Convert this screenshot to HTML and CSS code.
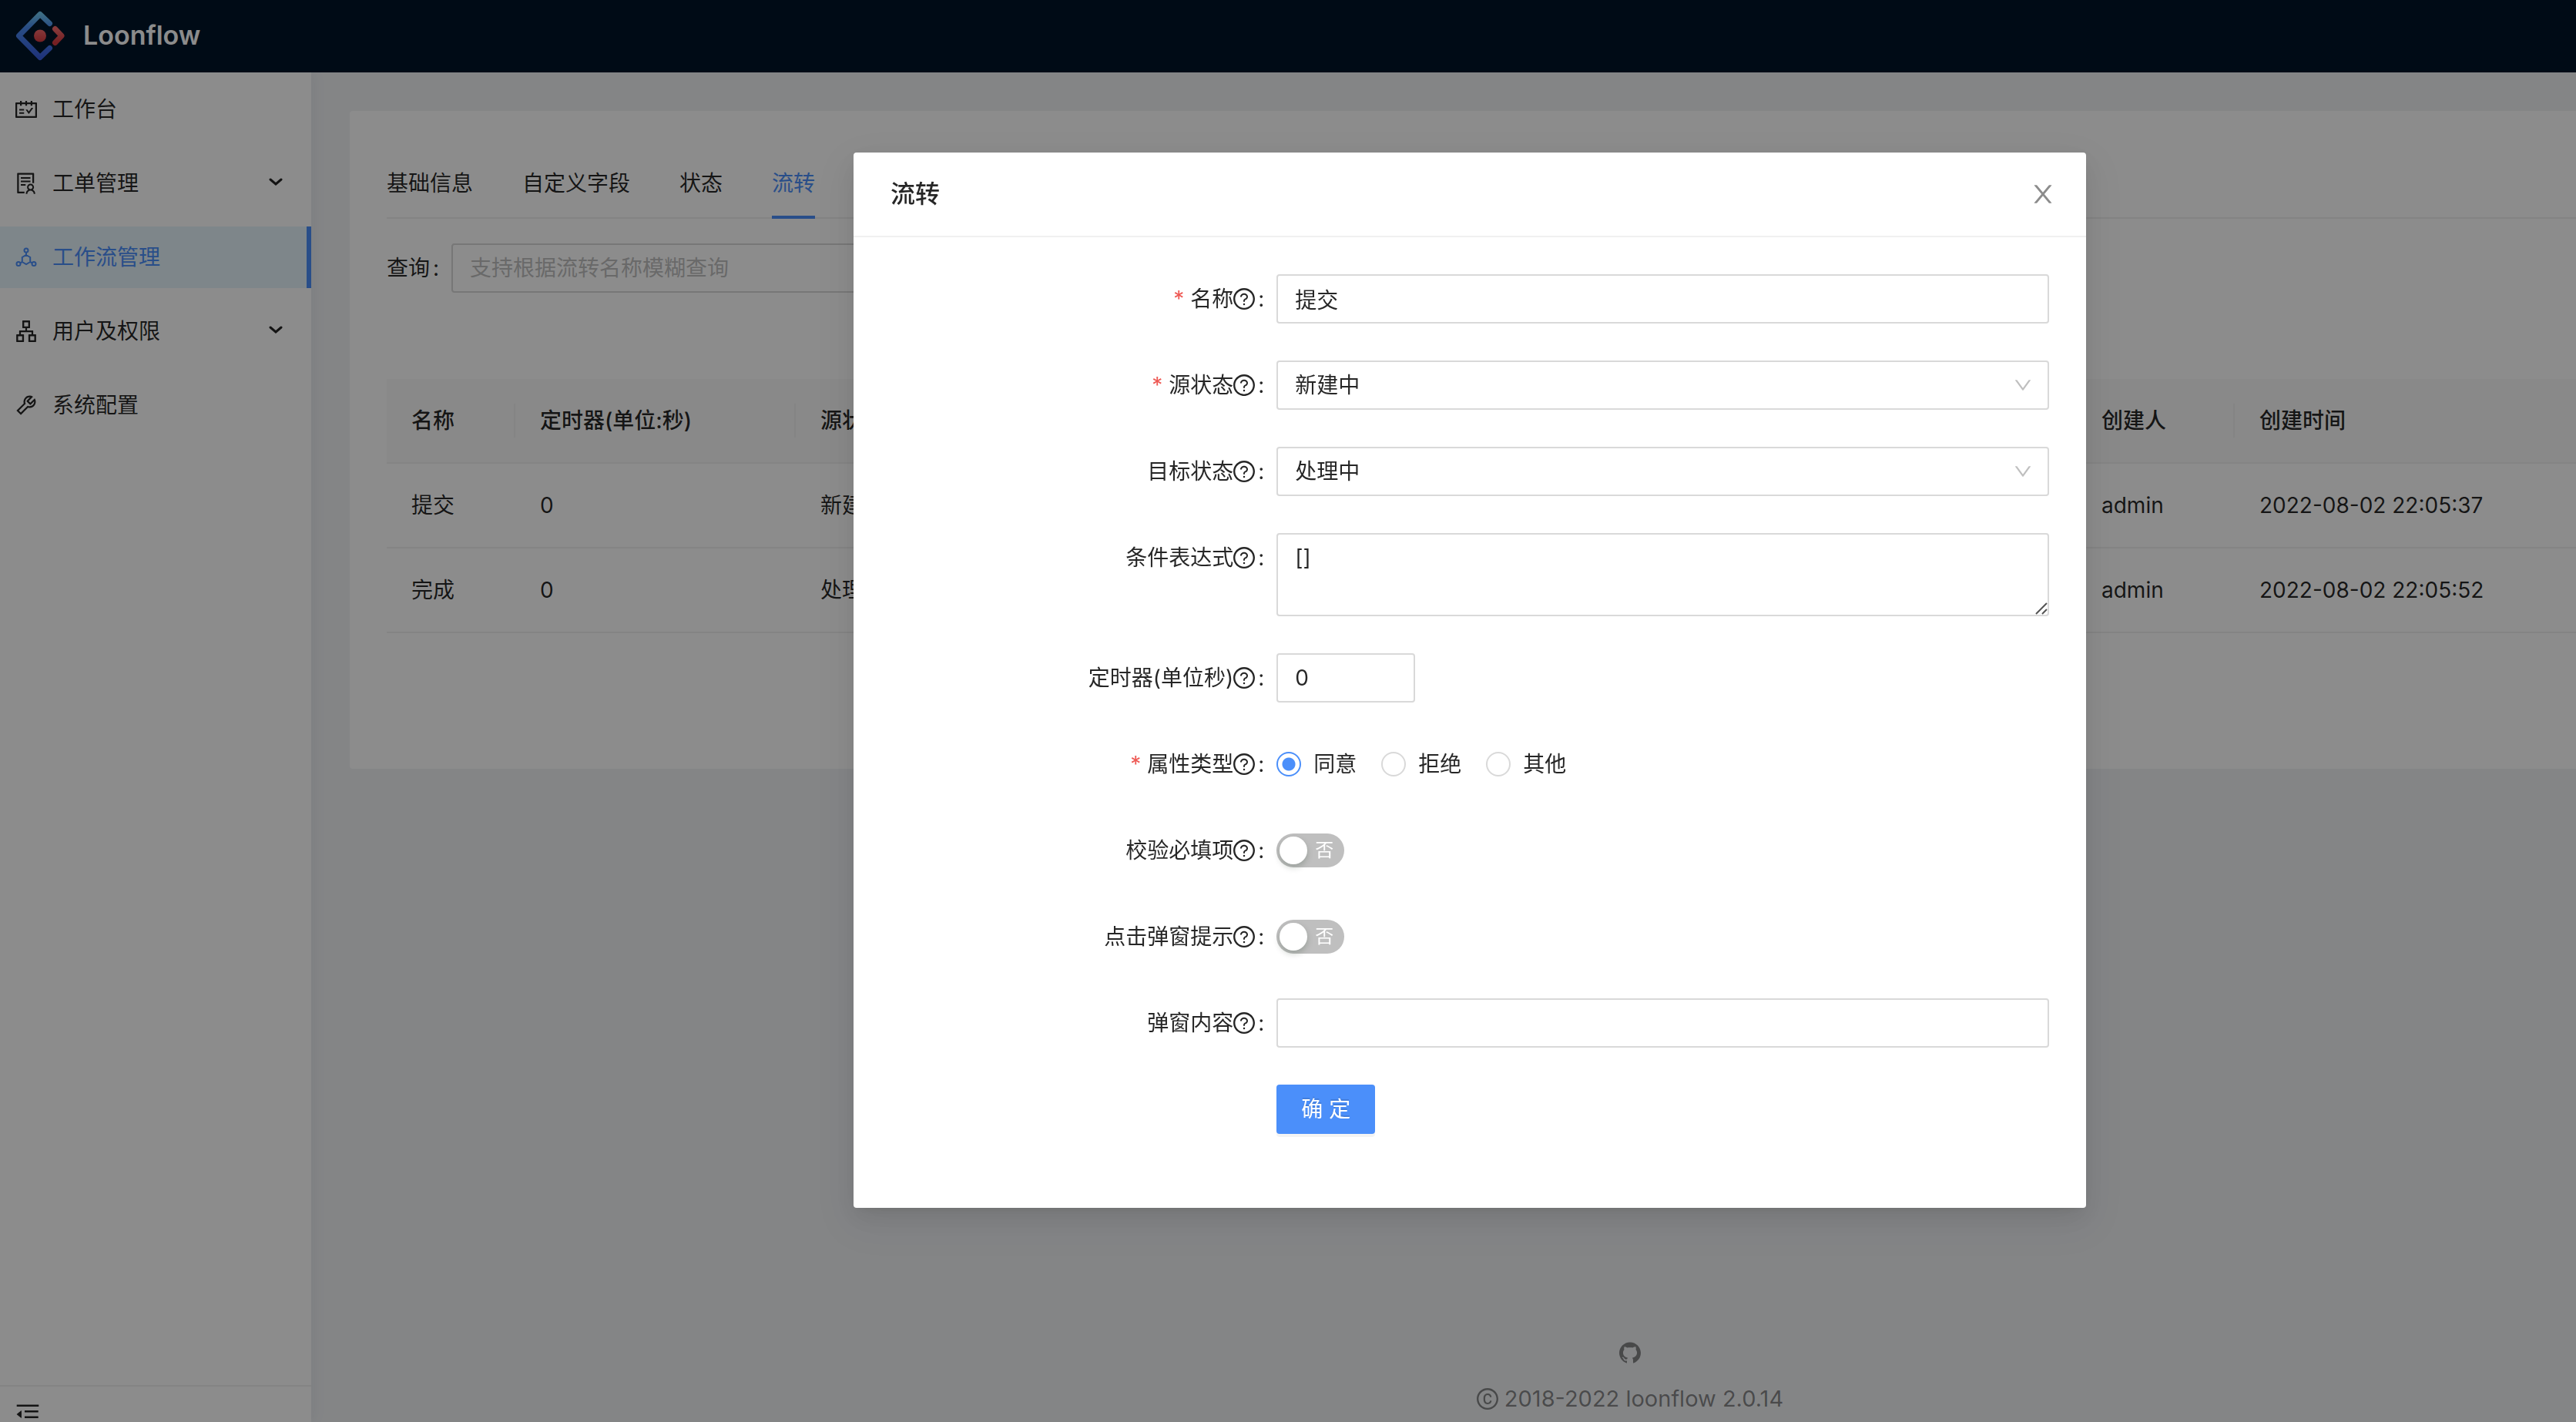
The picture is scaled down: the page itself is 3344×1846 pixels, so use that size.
FILE: index.html
```html
<!DOCTYPE html>
<html lang="zh-CN">
<head>
<meta charset="utf-8">
<title>Loonflow</title>
<link rel="stylesheet" href="styles.css">
</head>
<body>
<svg class="sprite" aria-hidden="true">
  <symbol id="i-help" viewBox="64 64 896 896"><path d="M512 64C264.6 64 64 264.6 64 512s200.6 448 448 448 448-200.6 448-448S759.4 64 512 64zm0 820c-205.4 0-372-166.6-372-372s166.6-372 372-372 372 166.6 372 372-166.6 372-372 372z"/><path d="M623.6 316.7C593.6 290.4 554 276 512 276s-81.6 14.5-111.6 40.7C369.2 344 352 380.7 352 420v7.6c0 4.4 3.6 8 8 8h48c4.4 0 8-3.6 8-8V420c0-44.1 43.1-80 96-80s96 35.9 96 80c0 31.1-22 59.6-56.1 72.7-21.2 8.1-39.2 22.3-52.1 40.9-13.1 19-19.9 41.8-19.9 64.9V620c0 4.4 3.6 8 8 8h48c4.4 0 8-3.6 8-8v-22.7a48.3 48.3 0 0130.9-44.8c59-22.7 97.1-74.7 97.1-132.5.1-39.3-17.1-76-48.3-103.3zM472 732a40 40 0 1080 0 40 40 0 10-80 0z"/></symbol>
  <symbol id="i-down" viewBox="64 64 896 896"><path d="M884 256h-75c-5.1 0-9.9 2.5-12.9 6.6L512 654.2 227.9 262.6c-3-4.1-7.8-6.6-12.9-6.6h-75c-6.5 0-10.3 7.4-6.5 12.7l352.6 486.1c12.8 17.6 39 17.6 51.7 0l352.6-486.1c3.9-5.3.1-12.7-6.4-12.7z"/></symbol>
  <symbol id="i-arrow" viewBox="0 0 18 10"><path d="M2 2l7 6 7-6" fill="none" stroke="currentColor" stroke-width="3" stroke-linecap="round"/></symbol>
</svg>

<header class="topbar">
  <a class="brand" href="#">
    <svg class="brand-logo" viewBox="0 0 64 65">
      <defs>
        <linearGradient id="g-blue" x1="0" y1="0" x2="0" y2="1"><stop offset="0" stop-color="#6fc6f0"/><stop offset=".3" stop-color="#4a8cf0"/><stop offset="1" stop-color="#3a5fe0"/></linearGradient>
        <linearGradient id="g-red" x1="0" y1="0" x2="0" y2="1"><stop offset="0" stop-color="#f4696b"/><stop offset="1" stop-color="#d5393f"/></linearGradient>
      </defs>
      <path d="M44.500 16.500L32 4.500 4.500 32.500l27.500 28 12.500-12" fill="none" stroke="url(#g-blue)" stroke-width="7" stroke-linecap="round" stroke-linejoin="round"/>
      <path d="M51.500 23.500l8.500 9-8.500 9" fill="none" stroke="url(#g-red)" stroke-width="7" stroke-linecap="round" stroke-linejoin="round"/>
      <circle cx="32" cy="32.500" r="8" fill="url(#g-red)"/>
    </svg>
    <span class="brand-name">Loonflow</span>
  </a>
</header>

<div class="layout">
  <aside class="sidebar">
    <nav class="menu">
      <a class="menu-item" href="#">
        <svg class="icon" viewBox="64 64 896 896"><path d="M928 224H768v-56c0-4.400-3.600-8-8-8h-56c-4.400 0-8 3.600-8 8v56H548v-56c0-4.400-3.600-8-8-8h-56c-4.400 0-8 3.600-8 8v56H328v-56c0-4.400-3.600-8-8-8h-56c-4.400 0-8 3.600-8 8v56H96c-17.700 0-32 14.300-32 32v576c0 17.700 14.300 32 32 32h832c17.700 0 32-14.300 32-32V256c0-17.700-14.300-32-32-32zm-40 568H136V296h120v56c0 4.400 3.600 8 8 8h56c4.400 0 8-3.600 8-8v-56h148v56c0 4.400 3.600 8 8 8h56c4.400 0 8-3.600 8-8v-56h148v56c0 4.400 3.600 8 8 8h56c4.400 0 8-3.600 8-8v-56h120v496zM416 496H232c-4.400 0-8 3.600-8 8v48c0 4.400 3.600 8 8 8h184c4.400 0 8-3.600 8-8v-48c0-4.400-3.600-8-8-8zm0 136H232c-4.400 0-8 3.600-8 8v48c0 4.400 3.600 8 8 8h184c4.400 0 8-3.600 8-8v-48c0-4.400-3.600-8-8-8zm308.200-177.400L620.600 598.300l-52.800-73.100c-3-4.200-7.800-6.600-12.900-6.600H500c-6.500 0-10.300 7.400-6.500 12.700l114.100 158.200a15.900 15.900 0 0025.800 0l165-228.700c3.800-5.300 0-12.700-6.500-12.700H737c-5-.1-9.800 2.400-12.800 6.500z"/></svg>
        <span>工作台</span>
      </a>
      <a class="menu-item" href="#">
        <svg class="icon" viewBox="64 64 896 896"><path d="M688 264c0-4.400-3.600-8-8-8H296c-4.400 0-8 3.600-8 8v48c0 4.400 3.600 8 8 8h384c4.400 0 8-3.600 8-8v-48zm-8 136H296c-4.400 0-8 3.600-8 8v48c0 4.400 3.600 8 8 8h384c4.400 0 8-3.600 8-8v-48c0-4.400-3.600-8-8-8zM480 544H296c-4.400 0-8 3.600-8 8v48c0 4.400 3.600 8 8 8h184c4.400 0 8-3.600 8-8v-48c0-4.400-3.600-8-8-8zm-48 308H208V148h560v344c0 4.400 3.600 8 8 8h56c4.400 0 8-3.600 8-8V108c0-17.700-14.300-32-32-32H168c-17.700 0-32 14.300-32 32v784c0 17.700 14.300 32 32 32h264c4.400 0 8-3.600 8-8v-56c0-4.400-3.600-8-8-8zm356.800-74.400c29-26.300 47.200-64.300 47.200-106.600 0-79.500-64.500-144-144-144s-144 64.500-144 144c0 42.300 18.200 80.300 47.200 106.600-57 32.500-96.200 92.700-99.200 162.100-.2 4.500 3.500 8.300 8 8.300h48.100c4.200 0 7.700-3.300 8-7.600C564 871.200 621.700 816 692 816s128 55.200 131.900 124.400c.2 4.200 3.700 7.600 8 7.600H880c4.600 0 8.200-3.800 8-8.300-2.900-69.500-42.200-129.600-99.200-162.100zM692 591c44.200 0 80 35.800 80 80s-35.800 80-80 80-80-35.800-80-80 35.800-80 80-80z"/></svg>
        <span>工单管理</span>
        <svg class="menu-arrow"><use href="#i-arrow"/></svg>
      </a>
      <a class="menu-item is-active" href="#" aria-current="page">
        <svg class="icon icon-line" viewBox="0 0 28 28"><circle cx="14" cy="5" r="2.500"/><circle cx="4" cy="22.500" r="2.500"/><circle cx="24" cy="22.500" r="2.500"/><path d="M14 7.500V11M14 11l5.200 3v6L14 23l-5.200-3v-6zM8.800 20l-2.500 1.300M19.200 20l2.500 1.300"/></svg>
        <span>工作流管理</span>
      </a>
      <a class="menu-item" href="#">
        <svg class="icon" viewBox="64 64 896 896"><path d="M908 640H804V488c0-4.400-3.600-8-8-8H548v-96h108c8.800 0 16-7.200 16-16V80c0-8.800-7.200-16-16-16H368c-8.800 0-16 7.200-16 16v288c0 8.800 7.200 16 16 16h108v96H228c-4.400 0-8 3.600-8 8v152H116c-8.800 0-16 7.200-16 16v288c0 8.800 7.200 16 16 16h288c8.800 0 16-7.200 16-16V656c0-8.800-7.200-16-16-16H292v-88h440v88H620c-8.800 0-16 7.200-16 16v288c0 8.800 7.200 16 16 16h288c8.800 0 16-7.200 16-16V656c0-8.800-7.200-16-16-16zm-564 76v168H176V716h168zm84-408V140h168v168H428zm420 576H680V716h168v168z"/></svg>
        <span>用户及权限</span>
        <svg class="menu-arrow"><use href="#i-arrow"/></svg>
      </a>
      <a class="menu-item" href="#">
        <svg class="icon" viewBox="64 64 896 896"><path d="M876.600 239.500c-.5-.9-1.200-1.800-2-2.500-5-5-13.100-5-18.100 0L684.200 409.300l-67.900-67.900L788.700 169c.8-.8 1.400-1.600 2-2.500 3.600-6.100 1.600-13.900-4.500-17.500-98.200-58-226.800-44.700-311.300 39.700-67 67-89.200 162-66.500 247.400l-293 293c-3 3-2.800 7.900.3 11l169.700 169.700c3.100 3.100 8.100 3.300 11 .3l292.900-292.900c85.500 22.800 180.500.7 247.600-66.400 84.400-84.500 97.700-213.100 39.700-311.300zM786 499.800c-58.100 58.100-145.300 69.300-214.600 33.600l-8.800 8.800-.1-.1-274 274.100-79.200-79.200 230.100-230.100s0 .1.1.1l52.800-52.800c-35.700-69.300-24.500-156.500 33.600-214.600a184.200 184.200 0 01144-53.500L537 318.900a32.050 32.050 0 000 45.300l124.500 124.500a32.050 32.050 0 0045.300 0l132.800-132.800c3.700 51.800-14.400 104.800-53.600 143.900z"/></svg>
        <span>系统配置</span>
      </a>
    </nav>
    <button class="fold" type="button" aria-label="收起菜单">
      <svg class="icon icon-lg" viewBox="64 64 896 896"><path d="M408 442h480c4.400 0 8-3.600 8-8v-56c0-4.400-3.600-8-8-8H408c-4.400 0-8 3.600-8 8v56c0 4.400 3.600 8 8 8zm-8 204c0 4.400 3.600 8 8 8h480c4.400 0 8-3.600 8-8v-56c0-4.400-3.600-8-8-8H408c-4.400 0-8 3.600-8 8v56zm504-486H120c-4.400 0-8 3.600-8 8v56c0 4.400 3.600 8 8 8h784c4.400 0 8-3.600 8-8v-56c0-4.400-3.600-8-8-8zm0 632H120c-4.400 0-8 3.600-8 8v56c0 4.400 3.600 8 8 8h784c4.400 0 8-3.600 8-8v-56c0-4.400-3.600-8-8-8zM115.400 518.900L271.700 642c5.800 4.600 14.400.5 14.400-6.900V388.900c0-7.400-8.500-11.500-14.400-6.900L115.400 505.100a8.740 8.740 0 000 13.800z"/></svg>
    </button>
  </aside>

  <main class="content">
    <section class="card">
      <nav class="tabs">
        <a class="tab" href="#">基础信息</a>
        <a class="tab" href="#">自定义字段</a>
        <a class="tab" href="#">状态</a>
        <a class="tab is-active" href="#">流转</a>
      </nav>
      <div class="search">
        <label for="search">查询<span class="colon">:</span></label>
        <input class="field search-field" id="search" type="text" placeholder="支持根据流转名称模糊查询">
      </div>
      <table class="table">
        <colgroup><col class="c-name"><col class="c-timer"><col class="c-source"><col class="c-user"><col></colgroup>
        <thead>
          <tr><th>名称</th><th>定时器(单位:秒)</th><th>源状态</th><th>创建人</th><th>创建时间</th></tr>
        </thead>
        <tbody>
          <tr><td>提交</td><td>0</td><td>新建中</td><td>admin</td><td>2022-08-02 22:05:37</td></tr>
          <tr><td>完成</td><td>0</td><td>处理中</td><td>admin</td><td>2022-08-02 22:05:52</td></tr>
        </tbody>
      </table>
    </section>
    <footer class="footer">
      <a class="footer-link" href="#" aria-label="GitHub"><svg class="icon" viewBox="64 64 896 896"><path d="M511.600 76.300C264.300 76.200 64 276.400 64 523.500 64 718.900 189.300 885 363.800 946c23.500 5.900 19.900-10.800 19.900-22.200v-77.500c-135.700 15.900-141.200-73.900-150.300-88.900C215 726 171.500 718 184.500 703c30.900-15.900 62.400 4 98.900 57.900 26.400 39.100 77.900 32.500 104 26 5.700-23.500 17.900-44.500 34.700-60.800-140.600-25.200-199.200-111-199.200-213 0-49.500 16.300-95 48.300-131.700-20.400-60.500 1.900-112.300 4.900-120 58.100-5.200 118.500 41.600 123.200 45.300 33-8.900 70.700-13.600 112.900-13.600 42.400 0 80.200 4.900 113.500 13.900 11.300-8.600 67.300-48.800 121.300-43.900 2.900 7.700 24.700 58.300 5.500 118 32.400 36.800 48.900 82.700 48.900 132.300 0 102.200-59 188.100-200 212.900a127.500 127.500 0 0138.100 91v112.500c.8 9 0 17.900 15 17.900 177.100-59.700 304.600-227 304.600-424.100 0-247.200-200.400-447.300-447.500-447.300z"/></svg></a>
      <p class="copyright"><svg class="icon" viewBox="64 64 896 896"><path d="M512 64C264.600 64 64 264.600 64 512s200.600 448 448 448 448-200.600 448-448S759.400 64 512 64zm0 820c-205.400 0-372-166.600-372-372s166.600-372 372-372 372 166.600 372 372-166.600 372-372 372z"/><path d="M517.600 351.300c53 0 89 33.800 93 83.400.3 4.200 3.800 7.400 8 7.400h56.700c2.600 0 4.700-2.100 4.700-4.700 0-86.700-68.400-147.400-162.700-147.400C407.400 290 344 364.200 344 486.800v52.300C344 660.800 407.400 734 517.300 734c94 0 162.700-58.800 162.700-141.400 0-2.600-2.100-4.700-4.700-4.700h-56.800c-4.200 0-7.600 3.200-8 7.300-4.200 46.100-40.100 77.800-93 77.800-65.300 0-102.100-47.900-102.100-133.600v-52.600c.1-87 37-135.500 102.200-135.500z"/></svg><span>2018-2022 loonflow 2.0.14</span></p>
    </footer>
  </main>
</div>

<div class="mask">
  <section class="modal" role="dialog" aria-modal="true" aria-labelledby="modal-title">
    <header class="modal-head">
      <h2 class="modal-title" id="modal-title">流转</h2>
      <button class="close" type="button" aria-label="关闭"><svg class="icon icon-lg" viewBox="64 64 896 896"><path d="M563.800 512l262.500-312.900c4.400-5.200.7-13.100-6.100-13.100h-79.800c-4.700 0-9.200 2.100-12.300 5.700L511.600 449.800 295.100 191.700c-3-3.600-7.500-5.700-12.300-5.700H203c-6.800 0-10.500 7.900-6.100 13.100L459.400 512 196.900 824.900A7.950 7.950 0 00203 838h79.800c4.700 0 9.200-2.100 12.300-5.700l216.500-258.100 216.500 258.100c3 3.600 7.500 5.700 12.300 5.700h79.800c6.800 0 10.500-7.900 6.100-13.100L563.800 512z"/></svg></button>
    </header>
    <form class="form">
      <label class="label required" for="name">名称<svg class="icon"><use href="#i-help"/></svg><span class="colon">:</span></label>
      <input class="field" id="name" type="text" value="提交">

      <label class="label required" for="source">源状态<svg class="icon"><use href="#i-help"/></svg><span class="colon">:</span></label>
      <div class="select">
        <select class="field" id="source"><option>新建中</option></select>
        <svg class="select-arrow"><use href="#i-down"/></svg>
      </div>

      <label class="label" for="target">目标状态<svg class="icon"><use href="#i-help"/></svg><span class="colon">:</span></label>
      <div class="select">
        <select class="field" id="target"><option>处理中</option></select>
        <svg class="select-arrow"><use href="#i-down"/></svg>
      </div>

      <label class="label" for="expr">条件表达式<svg class="icon"><use href="#i-help"/></svg><span class="colon">:</span></label>
      <div class="area">
        <textarea class="field field-area" id="expr">[]</textarea>
        <svg class="grip" viewBox="0 0 16 16"><path d="M1 15L15 1M9 15l6-6" fill="none" stroke="#555" stroke-width="2"/></svg>
      </div>

      <label class="label" for="timer">定时器(单位秒)<svg class="icon"><use href="#i-help"/></svg><span class="colon">:</span></label>
      <input class="field field-number" id="timer" type="text" inputmode="numeric" value="0">

      <span class="label required" id="attr-label">属性类型<svg class="icon"><use href="#i-help"/></svg><span class="colon">:</span></span>
      <div class="radios" role="radiogroup" aria-labelledby="attr-label">
        <label class="radio"><input type="radio" name="attr" checked>同意</label>
        <label class="radio"><input type="radio" name="attr">拒绝</label>
        <label class="radio"><input type="radio" name="attr">其他</label>
      </div>

      <label class="label" for="check">校验必填项<svg class="icon"><use href="#i-help"/></svg><span class="colon">:</span></label>
      <div class="cell"><button class="switch" id="check" type="button" role="switch" aria-checked="false"><span class="knob"></span>否</button></div>

      <label class="label" for="prompt">点击弹窗提示<svg class="icon"><use href="#i-help"/></svg><span class="colon">:</span></label>
      <div class="cell"><button class="switch" id="prompt" type="button" role="switch" aria-checked="false"><span class="knob"></span>否</button></div>

      <label class="label" for="body">弹窗内容<svg class="icon"><use href="#i-help"/></svg><span class="colon">:</span></label>
      <input class="field" id="body" type="text">

      <button class="submit" type="submit">确 定</button>
    </form>
  </section>
</div>
</body>
</html>
```

FILE: styles.css
```css
:root {
  --primary: #4b8ffa;
  --text: rgba(0, 0, 0, .85);
  --muted: rgba(0, 0, 0, .45);
  --border: #d9d9d9;
  --line: #f0f0f0;
}

* { box-sizing: border-box; }

html { overflow: hidden; }

body {
  display: flex;
  flex-direction: column;
  height: 100vh;
  margin: 0;
  overflow: hidden;
  background: #f0f2f5;
  color: var(--text);
  font: 28px/44px Inter, "Noto Sans CJK SC", sans-serif;
}

a { color: inherit; text-decoration: none; }
button, input, select, textarea { margin: 0; font: inherit; color: inherit; }
button { padding: 0; border: 0; background: none; cursor: pointer; }

.sprite { position: absolute; width: 0; height: 0; }
.icon { flex: none; width: 28px; height: 28px; fill: currentColor; }
.icon-lg { width: 32px; height: 32px; }
.icon-line { fill: none; stroke: currentColor; stroke-width: 2; }

/* Top bar */
.topbar {
  display: flex;
  flex: none;
  align-items: center;
  height: 94px;
  padding: 0 20px 2px;
  background: #001529;
}
.brand { display: flex; align-items: center; gap: 24px; color: #fff; }
.brand-logo { width: 64px; height: 65px; }
.brand-name { font-size: 34px; font-weight: 600; }

/* Side menu */
.layout { display: flex; flex: 1; min-height: 0; }
.sidebar {
  display: flex;
  flex: none;
  flex-direction: column;
  width: 404px;
  background: #fff;
  box-shadow: 4px 0 16px rgba(29, 35, 41, .05);
}
.menu { display: flex; flex: 1; flex-direction: column; gap: 16px; padding-top: 8px; }
.menu-item {
  display: flex;
  align-items: center;
  gap: 20px;
  height: 80px;
  padding: 0 37px 0 20px;
}
.menu-item.is-active {
  border-right: 6px solid var(--primary);
  background: #e6f4fb;
  color: var(--primary);
}
.menu-arrow { width: 18px; height: 10px; margin: 0 0 4px auto; }
.fold {
  display: flex;
  height: 48px;
  padding: 20px 20px 0;
  border-top: 2px solid var(--line);
}

/* Page content */
.content {
  display: flex;
  flex: 1;
  flex-direction: column;
  min-width: 0;
  padding: 50px 0 8px 50px;
}
.card { padding: 72px 0 176px 48px; background: #fff; border-radius: 4px 0 0 4px; }

.tabs { display: flex; gap: 64px; border-bottom: 2px solid var(--line); }
.tab { height: 68px; margin-bottom: -2px; }
.tab.is-active { border-bottom: 4px solid var(--primary); color: var(--primary); }

.colon { margin: 0 16px 0 4px; }
.search { display: flex; align-items: center; padding: 32px 0 112px; }
.search label { flex: none; }

.field {
  display: block;
  width: 100%;
  height: 64px;
  padding: 0 22px;
  border: 2px solid var(--border);
  border-radius: 4px;
  outline: 0;
  background: #fff;
}
.field::placeholder { color: #bfbfbf; opacity: 1; }
.search-field { width: 720px; }

.table {
  width: 100%;
  border-collapse: separate;
  border-spacing: 0;
  table-layout: fixed;
  text-align: left;
}
.c-name { width: 167px; }
.c-timer { width: 364px; }
.c-source { width: 1663px; }
.c-user { width: 205px; }
.table th, .table td {
  padding: 32px 0 32px 32px;
  border-bottom: 2px solid var(--line);
}
.table th { position: relative; background: #fafafa; font-weight: 500; }
.table th:not(:last-child)::after {
  position: absolute;
  top: 32px;
  right: 0;
  width: 2px;
  height: 44px;
  background: var(--line);
  content: "";
}

.footer {
  display: flex;
  flex-direction: column;
  align-items: center;
  gap: 16px;
  margin-top: auto;
  padding-left: 434px;
  color: var(--muted);
}
.footer-link, .copyright { display: flex; align-items: center; gap: 8px; height: 44px; margin: 0; }
.copyright { font-size: 29px; }

/* Dialog */
.mask {
  position: fixed;
  inset: 0;
  display: flex;
  align-items: flex-start;
  justify-content: center;
  padding: 198px 0 0 472px;
  background: rgba(0, 0, 0, .45);
}
.modal {
  width: 1600px;
  background: #fff;
  border-radius: 4px;
  box-shadow: 0 6px 12px -8px rgba(0, 0, 0, .12), 0 12px 32px rgba(0, 0, 0, .08), 0 18px 56px 16px rgba(0, 0, 0, .05);
}
.modal-head {
  display: flex;
  align-items: center;
  justify-content: space-between;
  height: 110px;
  padding: 0 40px 0 48px;
  border-bottom: 2px solid var(--line);
}
.modal-title { margin: 0; font-size: 32px; font-weight: 500; }
.close { display: flex; color: var(--muted); }

.form {
  display: grid;
  grid-template-columns: 1fr 2fr;
  row-gap: 48px;
  padding: 48px 48px 96px;
}
.label { display: flex; align-items: center; justify-content: flex-end; height: 64px; }
.required::before { margin-right: 8px; color: #ee5a55; content: "*"; }

.select, .area { position: relative; }
.select .field { appearance: none; }
.select-arrow {
  position: absolute;
  top: 20px;
  right: 22px;
  width: 24px;
  height: 24px;
  fill: #bfbfbf;
  pointer-events: none;
}
.field-area { height: 108px; padding: 8px 22px; resize: none; }
.grip { position: absolute; right: 2px; bottom: 2px; width: 16px; height: 16px; pointer-events: none; }
.field-number { width: 180px; }

.radios, .cell { display: flex; align-items: center; gap: 32px; height: 64px; }
.radio { display: flex; align-items: center; gap: 16px; }
.radio input {
  width: 32px;
  height: 32px;
  border: 2px solid var(--border);
  border-radius: 50%;
  appearance: none;
}
.radio input:checked {
  border-color: var(--primary);
  background: radial-gradient(circle, var(--primary) 8px, #fff 9px);
}

.switch {
  display: flex;
  align-items: center;
  gap: 10px;
  width: 88px;
  height: 44px;
  padding: 0 4px;
  border-radius: 22px;
  background: #bfbfbf;
  color: #fff;
  font-size: 24px;
}
.knob { width: 36px; height: 36px; border-radius: 50%; background: #fff; box-shadow: 0 4px 8px rgba(0, 35, 11, .2); }

.submit {
  grid-column: 2;
  justify-self: start;
  height: 64px;
  padding: 0 32px;
  border-radius: 4px;
  background: var(--primary);
  box-shadow: 0 4px 0 rgba(0, 0, 0, .045);
  color: #fff;
  text-shadow: 0 -2px 0 rgba(0, 0, 0, .12);
}
```
